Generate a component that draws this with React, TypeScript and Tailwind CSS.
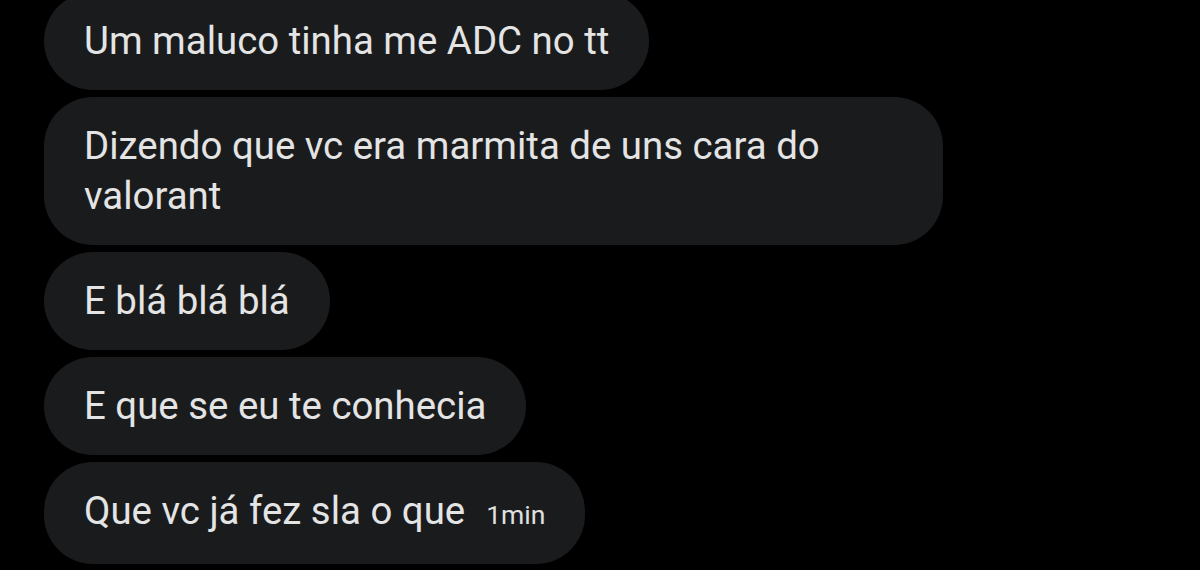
import React from 'react';

const messages: { text: string; time?: string }[] = [
  { text: 'Um maluco tinha me ADC no tt' },
  { text: 'Dizendo que vc era marmita de uns cara do valorant' },
  { text: 'E blá blá blá' },
  { text: 'E que se eu te conhecia' },
  { text: 'Que vc já fez sla o que', time: '1min' },
];

export default function App() {
  return (
    <div
      className="w-[1200px] h-[570px] overflow-hidden bg-black"
      style={{ fontFamily: 'Roboto, "Noto Sans", sans-serif' }}
    >
      <div className="flex flex-col items-start gap-[7px] pl-[44px] -mt-[8px]">
        {messages.map((m, i) => (
          <div
            key={i}
            className="max-w-[899px] rounded-[49px] bg-[#1a1b1d] px-[40px] py-[24px] text-[38.4px] leading-[50px] text-[#e4e4e4]"
          >
            {m.text}
            {m.time && <span className="ml-[21px] text-[26.5px] text-[#e0e0e0]">{m.time}</span>}
          </div>
        ))}
      </div>
    </div>
  );
}
